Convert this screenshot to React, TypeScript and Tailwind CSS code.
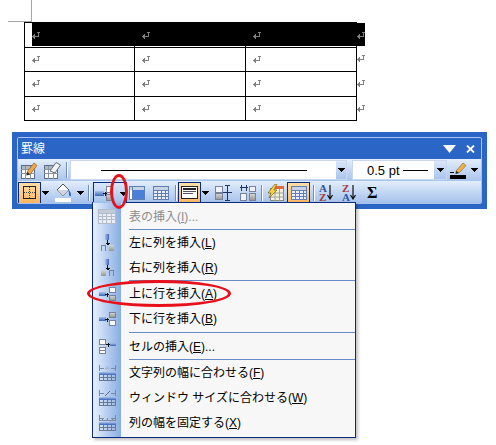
import React from "react";

const Ret = () => (
  <svg width="8" height="8" viewBox="0 0 8 8" className="block" shapeRendering="crispEdges">
    <path d="M5 0h3v1h-1v4H3v2H2V6H1V5H0V4h1V3h1V2h1v2h3V1H5z" fill="#808080" />
  </svg>
);

const Cell = ({ border }: { border?: boolean }) => (
  <div className={"h-full flex items-center pl-[7px] " + (border ? "border-r border-black" : "")}>
    <Ret />
  </div>
);

const Row = ({ last, h }: { last?: boolean; h: string }) => (
  <div className={"flex items-center " + h}>
    <div className={"w-[333px] h-full grid grid-cols-[110px_111px_1fr] border-x border-black " + (last ? "border-y" : "border-t")}>
      <Cell border />
      <Cell border />
      <Cell />
    </div>
    <Ret />
  </div>
);

const Caret = ({ className = "" }: { className?: string }) => (
  <svg width="7" height="4" viewBox="0 0 7 4" className={"shrink-0 " + className} shapeRendering="crispEdges">
    <path d="M0 0h7v1H6v1H5v1H4v1H3V3H2V2H1V1H0z" fill="#000" />
  </svg>
);

const Sep = ({ className = "" }: { className?: string }) => (
  <div className={"w-px h-[16px] shrink-0 bg-[#6a8ccb] shadow-[1px_0_0_#fff] " + className} />
);

const GridIcon = ({ c = "#5f7fb5", f = "#e8effb" }: { c?: string; f?: string }) => (
  <svg width="16" height="14" viewBox="0 0 16 14" className="shrink-0" shapeRendering="crispEdges">
    <rect x="0.500" y="0.500" width="15" height="13" fill={f} stroke={c} />
    <rect x="1" y="1" width="14" height="3" fill="#c9d3e4" />
    <path d="M0 4.500h16M0 7.500h16M0 10.500h16M4.500 4v10M8.500 4v10M12.500 4v10" stroke={c} />
  </svg>
);

const Orange = ({ className = "", children }: { className?: string; children: React.ReactNode }) => (
  <div className={"w-[23px] h-[22px] shrink-0 bg-gradient-to-b from-[#ffdfa8] to-[#fdb55e] border border-[#0a2a80] flex items-center justify-center " + className}>
    {children}
  </div>
);

const Defs = () => (
  <svg width="0" height="0" className="absolute">
    <defs>
      <linearGradient id="bar" x1="0" y1="0" x2="0" y2="1">
        <stop offset="0" stopColor="#a9c2ec" />
        <stop offset="1" stopColor="#3a64b8" />
      </linearGradient>
      <linearGradient id="barh" x1="0" y1="0" x2="1" y2="0">
        <stop offset="0" stopColor="#a9c2ec" />
        <stop offset="1" stopColor="#3a64b8" />
      </linearGradient>
      <linearGradient id="gbox" x1="0" y1="0" x2="0" y2="1">
        <stop offset="0" stopColor="#d8d8d4" />
        <stop offset="1" stopColor="#96968f" />
      </linearGradient>
    </defs>
  </svg>
);

const TablePen = ({ eraser }: { eraser?: boolean }) => (
  <svg width="17" height="18" viewBox="0 0 17 18" className="shrink-0" shapeRendering="crispEdges">
    <rect x="0.500" y="4.500" width="13" height="13" fill="#fff" stroke="#5f6b7f" />
    <rect x="1" y="5" width="12" height="3" fill="#aeb7c6" />
    <path d="M0 8.500h14M0 12.500h14M4.500 5v13M9.500 5v13" stroke="#8a93a3" />
    {eraser ? (
      <path d="M6 10L12 1.500 16.500 4 11 12z" fill="#f4f4f4" stroke="#5f6b7f" shapeRendering="auto" />
    ) : (
      <>
        <path d="M6 11L13 2l3 2.500L9 13.500z" fill="#eeaa4a" stroke="#8c5a18" strokeWidth=".7" shapeRendering="auto" />
        <path d="M6 11l3 2.500-3.500 1z" fill="#222" shapeRendering="auto" />
      </>
    )}
  </svg>
);

const Small = ({ k }: { k: string }) => {
  const g = "#77839a";
  if (k === "table")
    return (
      <svg width="18" height="15" viewBox="0 0 18 15" shapeRendering="crispEdges">
        <rect x=".5" y=".5" width="17" height="14" fill="#e9edf4" stroke="#b4bccb" />
        <rect x="1" y="1" width="16" height="3" fill="#c3cad8" />
        <path d="M0 4.500h18M0 7.500h18M0 10.500h18M4.500 4v11M8.500 4v11M13.500 4v11" stroke="#b4bccb" />
      </svg>
    );
  if (k === "left" || k === "right")
    return (
      <svg width="14" height="17" viewBox="0 0 14 17" shapeRendering="crispEdges">
        <rect x="5" y="0" width="4" height="6" fill="url(#barh)" />
        <path d="M7.500 6v5M5.500 9h4M6.500 10h2" stroke="#111" />
        <path d={k === "right" ? "M9.500 17v-5.500h3.500V17" : "M1.500 17v-5.500h3.500V17"} fill="none" stroke={g} />
        <rect x={k === "right" ? 1 : 9} y="11" width="5" height="6" fill="url(#gbox)" />
      </svg>
    );
  if (k === "up" || k === "down")
    return (
      <svg width="17" height="14" viewBox="0 0 17 14" shapeRendering="crispEdges">
        <rect x="0" y="5" width="7" height="4" fill="url(#bar)" />
        <path d="M6 7.500h4M8.500 5.500v4" stroke="#111" />
        <rect x="10.500" y=".5" width="6" height="5" fill={k === "down" ? "url(#gbox)" : "#fff"} stroke={g} />
        <rect x="10.500" y="8.500" width="6" height="5" fill={k === "up" ? "url(#gbox)" : "#fff"} stroke={g} />
      </svg>
    );
  if (k === "cell")
    return (
      <svg width="17" height="15" viewBox="0 0 17 15" shapeRendering="crispEdges">
        <rect x=".5" y=".5" width="6" height="5" fill="#fff" stroke={g} />
        <rect x=".5" y="8.500" width="6" height="6" fill="#fff" stroke={g} />
        <path d="M0 11.500h7" stroke={g} />
        <path d="M7 5.500h4M9 3.500v4" stroke="#111" />
        <rect x="11" y="4" width="6" height="3" fill="url(#bar)" />
      </svg>
    );
  return (
    <svg width="17" height="16" viewBox="0 0 17 16" shapeRendering="crispEdges">
      <path d="M.5 0v6M16.500 0v6M0 3.500h5M12 3.500h5" stroke="#7b8aa3" />
      {k === "w1" && <path d="M7 1l3 4M10 1l-3 4M6 3.500h5" stroke="#a9b9d4" shapeRendering="auto" />}
      {k === "w2" && <path d="M6 6l5-5" stroke="#5a6a86" shapeRendering="auto" />}
      {k === "w3" && <path d="M3 6V4M8 6V3M13 6V4M0 5.500h17" stroke="#7b8aa3" />}
      <rect x="0" y="7" width="17" height="3" fill="url(#bar)" />
      <path d="M.5 10v6M4.500 10v6M8.500 10v6M12.500 10v6M16.500 10v6M0 12.500h17M0 15.500h17" stroke="#6a7890" />
    </svg>
  );
};

const MenuRow = ({ icon, label, u, rest = ")", disabled }: { icon: string; label: string; u: string; rest?: string; disabled?: boolean }) => (
  <div className="flex items-center h-[25px]">
    <div className="w-[28px] flex justify-center shrink-0"><Small k={icon} /></div>
    <div className={"ml-[8px] whitespace-nowrap text-[12px] leading-none " + (disabled ? "text-[#8d8d8d]" : "text-black")}>
      {label}(<span className="underline">{u}</span>{rest}
    </div>
  </div>
);

const MSep = ({ className = "" }: { className?: string }) => (
  <div className={"h-px ml-[36px] bg-[#6a8cc4] " + className} />
);

const Sorter = ({ a, b, ca, cb, className = "" }: { a: string; b: string; ca: string; cb: string; className?: string }) => (
  <div className={"flex items-center w-[14px] shrink-0 " + className}>
    <div className="flex flex-col w-[8px] text-[11px] leading-[9px] font-bold" style={{ fontFamily: '"Liberation Serif", serif' }}>
      <span className={ca}>{a}</span>
      <span className={cb}>{b}</span>
    </div>
    <svg width="6" height="15" viewBox="0 0 6 15" className="shrink-0"><path d="M3 0v14M0.500 10l2.500 4 2.500-4" fill="none" stroke="#111" strokeWidth="1.200" /></svg>
  </div>
);

export default function App() {
  return (
    <div
      className="w-[496px] h-[445px] bg-white relative overflow-hidden"
      style={{ fontFamily: '"Liberation Sans", "Noto Sans CJK JP", sans-serif' }}
    >
      <Defs />
      {/* page corner mark */}
      <div className="absolute left-[8px] top-0 w-[24px] h-[22px] border-r border-b border-[#a6a6a6]" />

      {/* document table */}
      <div className="relative pt-[22px] ml-[24px]">
        <Row h="h-[25px]" />
        <Row h="h-[24px]" />
        <Row h="h-[25px]" />
        <Row h="h-[25px]" last />
        <div className="absolute left-[8px] top-[22px] w-[324px] h-[24px] bg-black" />
        <div className="absolute left-[332px] top-[23px] w-[9px] h-[23px] bg-black" />
        <div className="absolute left-[8px] top-[32px]"><Ret /></div>
        <div className="absolute left-[118px] top-[32px]"><Ret /></div>
        <div className="absolute left-[229px] top-[32px]"><Ret /></div>
        <div className="absolute left-[333px] top-[32px]"><Ret /></div>
      </div>

      {/* toolbar window */}
      <div className="mt-[11px] ml-[12px] w-[475px] h-[77px] bg-[#2b66c6] p-[5px]">
        <div className="h-[67px] border border-[#a9c3ec] rounded-[2px] overflow-hidden flex flex-col">
          <div className="h-[21px] shrink-0 bg-[#2b66c6] flex items-center justify-between pl-[3px] pr-[6px]">
            <span className="text-white text-[12px] leading-none">罫線</span>
            <div className="flex items-center gap-[10px]">
              <svg width="13" height="8" viewBox="0 0 13 8"><path d="M0 0h13L6.500 8z" fill="#fff" /></svg>
              <svg width="9" height="8" viewBox="0 0 9 8"><path d="M1 0.500l7 7M8 0.500l-7 7" stroke="#fff" strokeWidth="1.800" /></svg>
            </div>
          </div>
          {/* row one */}
          <div className="h-[22px] shrink-0 flex items-center bg-gradient-to-b from-[#e3eefc] to-[#a9c4ec]">
            <div className="ml-[3px]"><TablePen /></div>
            <div className="ml-[6px]"><TablePen eraser /></div>
            <Sep className="ml-[5px]" />
            <div className="ml-[3px] w-[277px] h-[20px] shrink-0 bg-white border border-[#c8d7ef] flex items-center justify-between">
              <div className="ml-[30px] w-[206px] h-px bg-black" />
              <div className="w-[10px] h-full bg-gradient-to-b from-[#dbe7f9] to-[#a9c4ec] flex items-center justify-center"><Caret /></div>
            </div>
            <div className="ml-[5px] w-[95px] h-[20px] shrink-0 bg-white border border-[#c8d7ef] flex items-center justify-between">
              <div className="flex items-center ml-[14px]">
                <span className="text-[13px] leading-none text-black">0.5 pt</span>
                <div className="ml-[3px] w-[25px] h-px bg-black" />
              </div>
              <div className="w-[12px] h-full bg-gradient-to-b from-[#dbe7f9] to-[#a9c4ec] flex items-center justify-center"><Caret /></div>
            </div>
            <div className="ml-[3px]">
              <svg width="17" height="18" viewBox="0 0 17 18" className="block">
                <path d="M6 10L13 2l3 2.500L9 12z" fill="#eeb04a" stroke="#8c5a18" strokeWidth=".6" />
                <path d="M6 10l3 2-3.500 1z" fill="#222" />
                <rect x="0" y="14" width="16" height="4" fill="#000" />
                <rect x="0" y="11" width="4" height="1" fill="#000" />
              </svg>
            </div>
            <Caret className="ml-[4px]" />
          </div>
          {/* row two */}
          <div className="h-[23px] shrink-0 flex items-center bg-gradient-to-b from-[#e3eefc] to-[#a2bfea]">
            <Orange>
              <svg width="13" height="13" viewBox="0 0 13 13" shapeRendering="crispEdges">
                <rect x=".5" y=".5" width="12" height="12" fill="none" stroke="#222" />
                <path d="M6.500 1v11M1 6.500h11" stroke="#444" strokeDasharray="1 1" />
              </svg>
            </Orange>
            <Caret className="ml-[1px]" />
            <div className="ml-[6px] shrink-0">
              <svg width="18" height="18" viewBox="0 0 18 18" className="block">
                <path d="M8 0l6 6-6 6-6-6z" fill="#fff" stroke="#555" />
                <path d="M2 6h12l-6 6z" fill="#cfd6e2" />
                <path d="M13 5c2 2 3 4 3 6s-2 1-2 0 0-3-1-6z" fill="#2b66c6" />
                <rect x="0" y="14" width="16" height="4" fill="#fff" />
              </svg>
            </div>
            <Caret className="ml-[4px]" />
            <Sep className="ml-[4px]" />
            <div className="ml-[4px] w-[34px] h-[22px] shrink-0 self-end border border-[#0a2a80] border-b-0 bg-gradient-to-b from-[#dbe7f9] to-[#a2bfea] flex items-center pl-[1px]">
              <svg width="18" height="15" viewBox="0 0 18 15" className="shrink-0" shapeRendering="crispEdges">
                <rect x="0" y="5" width="9" height="5" fill="url(#bar)" />
                <path d="M8 7.500h4M10.500 5.500v4" stroke="#111" />
                <rect x="11.500" y=".5" width="6" height="6" fill="#fff" stroke="#77839a" />
                <rect x="11.500" y="8.500" width="6" height="6" fill="url(#gbox)" stroke="#77839a" />
              </svg>
              <Caret className="ml-[7px]" />
            </div>
            <div className="ml-[2px] shrink-0">
              <svg width="16" height="14" viewBox="0 0 16 14" className="block" shapeRendering="crispEdges">
                <rect x=".5" y=".5" width="15" height="13" fill="#fff" stroke="#5f7fb5" />
                <rect x="1" y="1" width="14" height="3" fill="#c9d3e4" />
                <rect x="4" y="4" width="11" height="9" fill="#4a80dc" />
                <path d="M3.500 0v14" stroke="#5f7fb5" />
              </svg>
            </div>
            <div className="ml-[8px]"><GridIcon /></div>
            <Sep className="ml-[6px]" />
            <Orange className="ml-[2px]">
              <svg width="17" height="13" viewBox="0 0 17 13" shapeRendering="crispEdges">
                <rect x=".5" y=".5" width="16" height="12" fill="#fff" stroke="#222" />
                <path d="M2 2.500h13" stroke="#222" strokeWidth="2" />
                <path d="M2 5.500h13M2 7.500h10" stroke="#555" />
              </svg>
            </Orange>
            <Caret className="ml-[1px]" />
            <div className="ml-[6px] shrink-0">
              <svg width="17" height="16" viewBox="0 0 17 16" className="block" shapeRendering="crispEdges">
                <rect x=".5" y="1.500" width="7" height="6" fill="#eef2f9" stroke="#77839a" />
                <rect x=".5" y="8.500" width="7" height="6" fill="url(#gbox)" stroke="#77839a" />
                <path d="M12.500 0v16M10 .5h5M10 15.500h5M8 7.500h9" stroke="#1f3560" />
              </svg>
            </div>
            <div className="ml-[8px] shrink-0">
              <svg width="16" height="16" viewBox="0 0 16 16" className="block" shapeRendering="crispEdges">
                <path d="M1.500 6V0M6.500 6V0M0 2.500h8" stroke="#1f3560" />
                <rect x=".5" y="8.500" width="6" height="7" fill="#eef2f9" stroke="#77839a" />
                <rect x="9.500" y="8.500" width="6" height="7" fill="url(#gbox)" stroke="#77839a" />
                <rect x="9.500" y="1.500" width="6" height="5" fill="#eef2f9" stroke="#77839a" />
              </svg>
            </div>
            <Sep className="ml-[5px]" />
            <div className="ml-[5px] shrink-0">
              <svg width="17" height="17" viewBox="0 0 17 17" className="block">
                <rect x="3.500" y="4.500" width="13" height="12" fill="#f4f0e2" stroke="#8a8a7a" />
                <path d="M3 9h14M3 13h14M8 5v12M12.500 5v12" stroke="#a0a090" />
                <rect x="8" y="2" width="9" height="3" fill="#e06a3c" />
                <path d="M8 0L1 9h3L2 14l8-8H7l3-6z" fill="#f7d23e" stroke="#6b5210" strokeWidth=".6" />
              </svg>
            </div>
            <Orange className="ml-[3px]"><GridIcon /></Orange>
            <Sep className="ml-[3px]" />
            <Sorter a="A" b="Z" ca="text-[#2b55a8]" cb="text-[#a33a3a]" className="ml-[5px]" />
            <Sorter a="Z" b="A" ca="text-[#a33a3a]" cb="text-[#2b55a8]" className="ml-[9px]" />
            <span className="ml-[11px] text-[16px] font-bold leading-none text-black" style={{ fontFamily: '"Liberation Serif", serif' }}>Σ</span>
          </div>
        </div>
      </div>

      {/* dropdown menu */}
      <div className="absolute left-[92px] top-[202px] w-[264px] h-[236px] bg-[#f7f7f7] border border-[#0a2a80] shadow-[2px_2px_3px_rgba(0,0,0,0.25)]">
        <div className="absolute left-0 top-0 bottom-0 w-[28px] bg-gradient-to-r from-[#e8f0fc] to-[#88ade2]" />
        <div className="absolute left-0 -top-px w-[33px] h-px bg-[#a2bfea]" />
        <div className="relative pt-[1px]">
          <MenuRow icon="table" label="表の挿入" u="I" rest=")..." disabled />
          <MSep />
          <MenuRow icon="left" label="左に列を挿入" u="L" />
          <MenuRow icon="right" label="右に列を挿入" u="R" />
          <MSep />
          <MenuRow icon="up" label="上に行を挿入" u="A" />
          <MenuRow icon="down" label="下に行を挿入" u="B" />
          <MSep className="my-[1px]" />
          <MenuRow icon="cell" label="セルの挿入" u="E" rest=")..." />
          <MSep />
          <MenuRow icon="w1" label="文字列の幅に合わせる" u="F" />
          <MenuRow icon="w2" label="ウィンドウ サイズに合わせる" u="W" />
          <MenuRow icon="w3" label="列の幅を固定する" u="X" />
        </div>
      </div>

      {/* red annotations */}
      <div className="absolute left-[110px] top-[174px] w-[18px] h-[35px] rounded-[50%] border-[3px] border-[#e8101a]" />
      <div className="absolute left-[87px] top-[280px] w-[144px] h-[27px] rounded-[50%] border-[3px] border-[#e8101a]" />
    </div>
  );
}
